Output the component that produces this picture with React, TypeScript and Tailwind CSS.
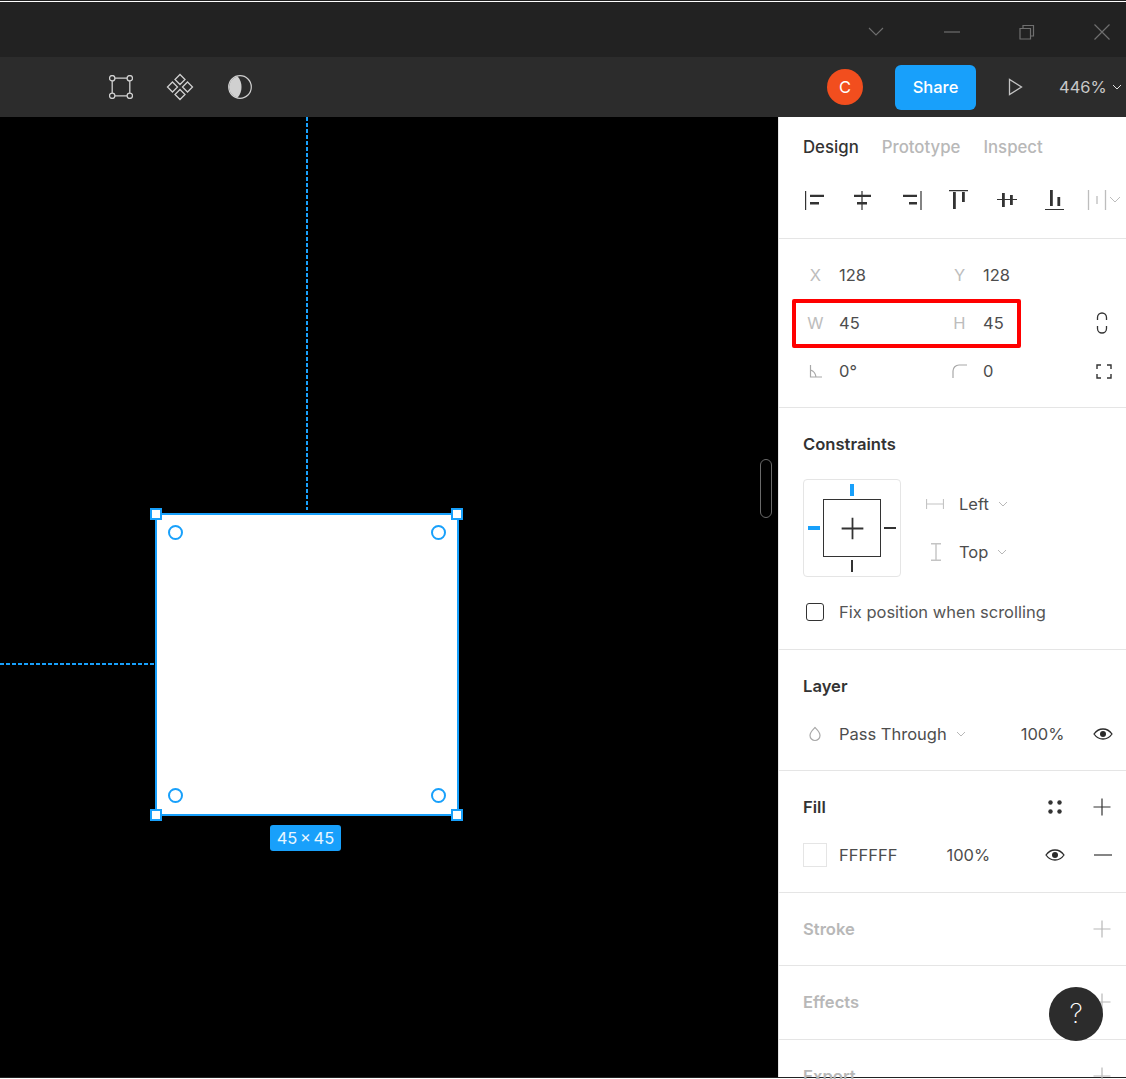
import React from "react";

const Chevron = ({ className = "" }: { className?: string }) => (
  <svg width="10" height="6" viewBox="0 0 10 6" fill="none" className={className}>
    <path d="M1 1l4 4 4-4" stroke="currentColor" strokeWidth="1" />
  </svg>
);

const Plus = ({ className = "", sw = 1.2 }: { className?: string; sw?: number }) => (
  <svg width="18" height="18" viewBox="0 0 18 18" className={className} fill="none">
    <path d="M0.500 9h17M9 0.500v17" stroke="currentColor" strokeWidth={sw} />
  </svg>
);

const Eye = () => (
  <svg width="20" height="14" viewBox="0 0 20 14" fill="none">
    <path d="M1 7c2.400-3.400 5.400-5 9-5s6.600 1.600 9 5c-2.400 3.400-5.400 5-9 5s-6.600-1.600-9-5z" stroke="#2b2b2b" strokeWidth="1.300" />
    <circle cx="10" cy="7" r="3" fill="#2b2b2b" />
  </svg>
);

// alignment icons, 24px box each, 48px apart
const alignIcons = [
  "M2 3h1.200v19H2zM7 6.800h14v2.200H7zM7 14h9v2.500H7z",
  "M10.400 3h1.200v19h-1.200zM3 6.800h17v2.200H3zM6 14h10v2.500H6z",
  "M21.400 3h1.200v19h-1.200zM4 6.800h14v2.200H4zM10 14h8v2.500h-8z",
  "M2 2h19v1.200H2zM6 4h2.800v17H6zM15 4h2.800v10H15z",
  "M2 10.900h20v1.200H2zM7 5h2.800v14H7zM15 7h2.800v10H15z",
  "M2 20.900h19v1.200H2zM7 2h2.800v16H7zM14.400 9h2.800v9h-2.800z",
];

const Section = ({ className = "", children }: { className?: string; children: React.ReactNode }) => (
  <section className={`border-b border-[#e5e5e5] px-6 ${className}`}>{children}</section>
);

const AddSection = ({ title, h }: { title: string; h: string }) => (
  <section className={`flex items-start justify-between border-b border-[#e5e5e5] pl-6 pr-[15px] pt-[24px] ${h}`}>
    <span className="text-[16.6px] font-semibold leading-[24px] text-[#b8b8b8]">{title}</span>
    <Plus className="mt-[3px] text-[#b8b8b8]" />
  </section>
);

const Field = ({ label, value, w }: { label: React.ReactNode; value: string; w: string }) => (
  <div className={`flex shrink-0 items-center ${w}`}>
    <span className="flex w-9 justify-center pr-[11px] text-[16.5px] text-[#bdbdbd]">{label}</span>
    <span className="text-[16.5px] text-[#4d4d4d]">{value}</span>
  </div>
);

const Handle = ({ className }: { className: string }) => (
  <span className={`absolute h-[12px] w-[12px] border-2 border-[#18a0fb] bg-white ${className}`} />
);

const Radius = ({ className }: { className: string }) => (
  <span className={`absolute h-[15px] w-[15px] rounded-full border-2 border-[#18a0fb] bg-white ${className}`} />
);

export default function App() {
  return (
    <div className="flex h-[1079px] w-[1126px] flex-col overflow-hidden bg-white font-['Inter',sans-serif]">
      <div className="h-px shrink-0 bg-[#222222]" />
      <div className="h-px shrink-0 bg-white" />

      {/* title bar */}
      <header className="flex h-[55px] shrink-0 items-center justify-end bg-[#222222] text-[#6f6f6f]">
        <svg width="16" height="10" viewBox="0 0 16 10" fill="none" className="mr-[60px] mt-[4px]">
          <path d="M1 1l7 7 7-7" stroke="currentColor" strokeWidth="1.100" />
        </svg>
        <svg width="16" height="2" viewBox="0 0 16 2" className="mr-[59px] mt-[4px]">
          <path d="M0 1h16" stroke="currentColor" strokeWidth="1.200" />
        </svg>
        <svg width="16" height="16" viewBox="0 0 16 16" fill="none" className="mr-[59px] mt-[4px]">
          <path d="M1 4.500h10.500v10.500H1zM4 4.500V1.500h10.500V12h-3" stroke="currentColor" strokeWidth="1.200" />
        </svg>
        <svg width="16" height="16" viewBox="0 0 16 16" fill="none" className="mr-[16px] mt-[4px]">
          <path d="M.5.500l15 15M15.500.500l-15 15" stroke="currentColor" strokeWidth="1.200" />
        </svg>
      </header>

      {/* toolbar */}
      <div className="flex h-[60px] shrink-0 items-center bg-[#2c2c2c]">
        <svg width="24" height="24" viewBox="0 0 24 24" fill="none" className="ml-[109px]" stroke="#d0d0d0" strokeWidth="1.300">
          <path d="M6 3.200h12M6 20.800h12M3.200 6v12M20.800 6v12" />
          <circle cx="3.200" cy="3.200" r="2.700" />
          <circle cx="20.800" cy="3.200" r="2.700" />
          <circle cx="3.200" cy="20.800" r="2.700" />
          <circle cx="20.800" cy="20.800" r="2.700" />
        </svg>
        <svg width="28" height="28" viewBox="0 0 28 28" fill="none" className="ml-[33px]" stroke="#d0d0d0" strokeWidth="1.300">
          <path d="M14 1.500l5 5-5 5-5-5zM14 16.500l5 5-5 5-5-5zM6.500 9l5 5-5 5-5-5zM21.500 9l5 5-5 5-5-5z" />
        </svg>
        <svg width="24" height="24" viewBox="0 0 24 24" className="ml-[34px]">
          <circle cx="12" cy="12" r="11.300" fill="none" stroke="#d0d0d0" strokeWidth="1.200" />
          <path d="M9.500 1.300A11 11 0 0 0 9.500 22.700C12.500 19.500 13.500 15.500 13.500 12 13.500 8.500 12.500 4.500 9.500 1.300z" fill="#d0d0d0" />
        </svg>

        <span className="ml-[575px] flex h-9 w-9 items-center justify-center rounded-full bg-[#f24e1e] text-[16.5px] text-white">C</span>
        <button className="ml-[32px] h-[45px] w-[81px] rounded-[6px] bg-[#18a0fb] text-[16.5px] font-medium text-white">Share</button>
        <svg width="16" height="18" viewBox="0 0 16 18" fill="none" className="ml-[32px]">
          <path d="M1.500 1.500v15l12-7.500z" stroke="#c4c4c4" strokeWidth="1.300" />
        </svg>
        <span className="ml-[35px] text-[16.5px] text-[#c8c8c8]">446%</span>
        <Chevron className="ml-[5px] text-[#e0e0e0]" />
      </div>

      <div className="flex min-h-0 flex-1">
        {/* canvas */}
        <main className="relative w-[778px] shrink-0 bg-black">
          <span className="absolute left-[306px] top-0 h-[393px] w-[2px] bg-[repeating-linear-gradient(180deg,#18a0fb_0_4px,transparent_4px_6px)]" />
          <span className="absolute left-0 top-[546px] h-[2px] w-[155px] bg-[repeating-linear-gradient(90deg,#18a0fb_0_4px,transparent_4px_6px)]" />
          <div className="absolute left-[155px] top-[396px] h-[303px] w-[304px] border-2 border-[#18a0fb] bg-white" />
          <Handle className="left-[150px] top-[391px]" />
          <Handle className="left-[451px] top-[391px]" />
          <Handle className="left-[150px] top-[692px]" />
          <Handle className="left-[451px] top-[692px]" />
          <Radius className="left-[168px] top-[408px]" />
          <Radius className="left-[431px] top-[408px]" />
          <Radius className="left-[168px] top-[671px]" />
          <Radius className="left-[431px] top-[671px]" />
          <span className="absolute left-[270px] top-[708px] flex h-[26px] w-[71px] items-center justify-center rounded-[3px] bg-[#18a0fb] text-[16.5px] text-[#e8f6ff] [word-spacing:-2px]">45 × 45</span>
          <span className="absolute left-[760px] top-[342px] h-[59px] w-[12px] rounded-full border border-[#6a6a6a]" />
        </main>

        {/* right panel */}
        <aside className="relative min-w-0 flex-1 border-l border-[#e5e5e5] bg-white">
          <Section className="h-[122px]">
            <div className="flex gap-[23px] pt-[17px] text-[16.8px] font-medium leading-[26px] text-[#b8b8b8]">
              <span className="text-[#333333]">Design</span>
              <span>Prototype</span>
              <span>Inspect</span>
            </div>
            <div className="mt-[28px] flex w-[330px] items-center">
              <div className="flex gap-[24px]">
                {alignIcons.map((d) => (
                  <svg key={d} width="24" height="24" viewBox="0 0 24 24" fill="#333333">
                    <path d={d} />
                  </svg>
                ))}
              </div>
              <svg width="34" height="22" viewBox="0 0 34 22" fill="none" stroke="#bdbdbd" className="ml-[20px] shrink-0">
                <path d="M1.500 1v20M10 7v8M18.500 1v20" strokeWidth="1.300" />
                <path d="M23 8l5 5 5-5" />
              </svg>
            </div>
          </Section>

          <Section className="relative h-[169px]">
            <div className="flex h-[48px] items-center pt-[24px]">
              <Field label="X" value="128" w="w-[144px]" />
              <Field label="Y" value="128" w="w-[149px]" />
            </div>
            <div className="mt-[12px] flex h-[48px] items-center">
              <Field label="W" value="45" w="w-[144px]" />
              <Field label="H" value="45" w="w-[149px]" />
              <svg width="12" height="22" viewBox="0 0 12 22" fill="none" className="shrink-0" stroke="#333333" strokeWidth="1.300">
                <path d="M1.500 8V5.500a4.500 4.500 0 019 0V8M1.500 14v2.500a4.500 4.500 0 009 0V14" />
              </svg>
            </div>
            <div className="flex h-[48px] items-center">
              <Field
                label={
                  <svg width="14" height="14" viewBox="0 0 14 14" fill="none" stroke="#a8a8a8" strokeWidth="1.200">
                    <path d="M1.500 1v12H13M1.500 6c3 1 5 3 5.500 7" />
                  </svg>
                }
                value="0°"
                w="w-[144px]"
              />
              <Field
                label={
                  <svg width="16" height="14" viewBox="0 0 16 14" fill="none" stroke="#a8a8a8" strokeWidth="1.200">
                    <path d="M1 14V7a6 6 0 016-6h8" />
                  </svg>
                }
                value="0"
                w="w-[149px]"
              />
              <svg width="16" height="15" viewBox="0 0 16 15" fill="none" className="shrink-0" stroke="#333333" strokeWidth="1.400">
                <path d="M1 5V1h4M11 1h4v4M15 10v4h-4M5 14H1v-4" />
              </svg>
            </div>
            {/* red highlight from the annotated screenshot */}
            <span className="absolute left-[13px] top-[60px] h-[49px] w-[229px] rounded-[2px] border-[4px] border-[#ff0000]" />
          </Section>

          <Section className="h-[242px]">
            <h3 className="pt-[24px] text-[16.6px] font-semibold leading-[24px] text-[#333333]">Constraints</h3>
            <div className="mt-[23px] flex">
              <div className="relative h-[98px] w-[98px] rounded-[4px] border border-[#e5e5e5]">
                <div className="absolute left-[19px] top-[19px] flex h-[58px] w-[58px] items-center justify-center border border-[#333333]">
                  <Plus className="h-[23px] w-[23px] text-[#333333]" sw={1.4} />
                </div>
                <span className="absolute left-[46px] top-[4px] h-3 w-[4px] bg-[#18a0fb]" />
                <span className="absolute left-[4px] top-[46px] h-[4px] w-3 bg-[#18a0fb]" />
                <span className="absolute left-[80px] top-[47px] h-[2px] w-3 bg-[#333333]" />
                <span className="absolute left-[47px] top-[80px] h-3 w-[2px] bg-[#333333]" />
              </div>
              <div className="ml-[25px] flex flex-col pt-px">
                <div className="flex h-[48px] items-center">
                  <svg width="18" height="10" viewBox="0 0 18 10" fill="none" stroke="#c4c4c4" strokeWidth="1.200">
                    <path d="M.5 0v10M17.500 0v10M.5 5h17" />
                  </svg>
                  <span className="ml-[15px] text-[16.5px] text-[#4d4d4d]">Left</span>
                  <Chevron className="ml-[9px] text-[#b8b8b8]" />
                </div>
                <div className="flex h-[48px] items-center">
                  <svg width="18" height="18" viewBox="0 0 18 18" fill="none" stroke="#c4c4c4" strokeWidth="1.400">
                    <path d="M5 .7h10M5 17.300h10M10 .7v16.600" />
                  </svg>
                  <span className="ml-[15px] text-[16.5px] text-[#4d4d4d]">Top</span>
                  <Chevron className="ml-[9px] text-[#b8b8b8]" />
                </div>
              </div>
            </div>
            <label className="mt-[23px] ml-[3px] flex items-center">
              <span className="h-[18px] w-[18px] rounded-[3px] border border-[#333333]" />
              <span className="ml-[15px] text-[16.5px] text-[#555555]">Fix position when scrolling</span>
            </label>
          </Section>

          <Section className="h-[121px]">
            <h3 className="pt-[24px] text-[16.6px] font-semibold leading-[24px] text-[#333333]">Layer</h3>
            <div className="mt-[24px] flex items-center">
              <svg width="14" height="16" viewBox="0 0 14 16" fill="none" stroke="#a8a8a8" strokeWidth="1.200" className="ml-[5px] shrink-0">
                <path d="M7 1.500c2.500 2.500 5 4.700 5 8a5 5 0 01-10 0c0-3.300 2.500-5.500 5-8z" />
              </svg>
              <span className="ml-[17px] shrink-0 text-[16.5px] text-[#4d4d4d]">Pass Through</span>
              <Chevron className="ml-[9px] shrink-0 text-[#b8b8b8]" />
              <span className="ml-[55px] shrink-0 text-[16.5px] text-[#4d4d4d]">100%</span>
              <span className="ml-[29px] shrink-0"><Eye /></span>
            </div>
          </Section>

          <Section className="h-[122px]">
            <div className="flex items-center pt-[24px]">
              <h3 className="text-[16.6px] font-semibold leading-[24px] text-[#333333]">Fill</h3>
              <svg width="14" height="14" viewBox="0 0 14 14" fill="#333333" className="ml-auto">
                <circle cx="2.500" cy="2.500" r="2.200" />
                <circle cx="11.500" cy="2.500" r="2.200" />
                <circle cx="2.500" cy="11.500" r="2.200" />
                <circle cx="11.500" cy="11.500" r="2.200" />
              </svg>
              <Plus className="-mr-[9px] ml-[31px] text-[#333333]" />
            </div>
            <div className="mt-[24px] flex items-center">
              <span className="h-6 w-6 shrink-0 border border-[#e5e5e5] bg-white" />
              <span className="ml-[12px] shrink-0 text-[16.5px] text-[#4d4d4d]">FFFFFF</span>
              <span className="ml-[49px] shrink-0 text-[16.5px] text-[#4d4d4d]">100%</span>
              <span className="ml-[55px] shrink-0"><Eye /></span>
              <svg width="18" height="2" viewBox="0 0 18 2" className="ml-[29px] shrink-0">
                <path d="M0 1h18" stroke="#333333" strokeWidth="1.200" />
              </svg>
            </div>
          </Section>

          <AddSection title="Stroke" h="h-[73px]" />
          <AddSection title="Effects" h="h-[74px]" />
          <AddSection title="Export" h="h-[74px]" />

          <button className="absolute left-[270px] top-[870px] flex h-[54px] w-[54px] items-center justify-center rounded-full bg-[#2c2c2c] text-[27px] font-extralight text-white">?</button>
        </aside>
      </div>

      <div className="h-px shrink-0 bg-[#222222]" />
      <div className="h-px shrink-0 bg-white" />
    </div>
  );
}
